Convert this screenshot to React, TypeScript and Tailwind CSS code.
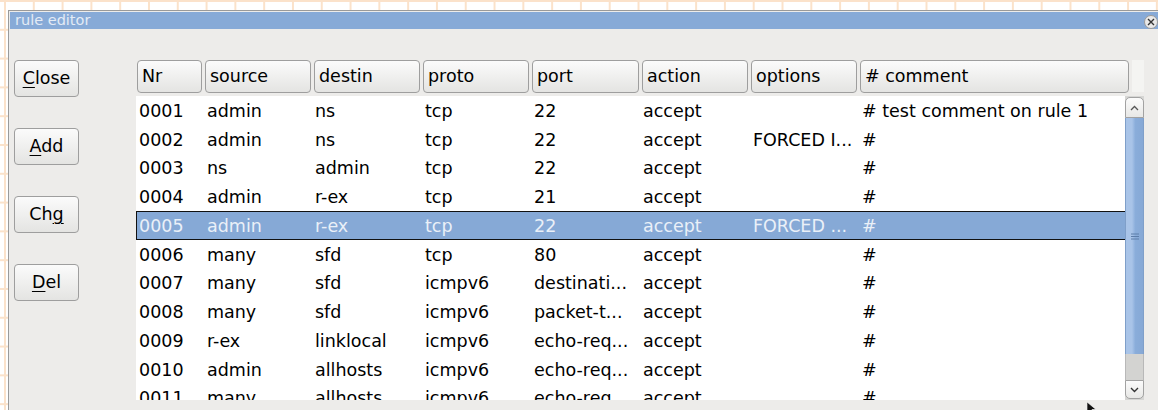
import React from 'react';

type Rule = {
  nr: string;
  source: string;
  destin: string;
  proto: string;
  port: string;
  action: string;
  options: string;
  comment: string;
};

const RULES: Rule[] = [
  { nr: '0001', source: 'admin', destin: 'ns', proto: 'tcp', port: '22', action: 'accept', options: '', comment: '# test comment on rule 1' },
  { nr: '0002', source: 'admin', destin: 'ns', proto: 'tcp', port: '22', action: 'accept', options: 'FORCED I...', comment: '#' },
  { nr: '0003', source: 'ns', destin: 'admin', proto: 'tcp', port: '22', action: 'accept', options: '', comment: '#' },
  { nr: '0004', source: 'admin', destin: 'r-ex', proto: 'tcp', port: '21', action: 'accept', options: '', comment: '#' },
  { nr: '0005', source: 'admin', destin: 'r-ex', proto: 'tcp', port: '22', action: 'accept', options: 'FORCED ...', comment: '#' },
  { nr: '0006', source: 'many', destin: 'sfd', proto: 'tcp', port: '80', action: 'accept', options: '', comment: '#' },
  { nr: '0007', source: 'many', destin: 'sfd', proto: 'icmpv6', port: 'destinati...', action: 'accept', options: '', comment: '#' },
  { nr: '0008', source: 'many', destin: 'sfd', proto: 'icmpv6', port: 'packet-t...', action: 'accept', options: '', comment: '#' },
  { nr: '0009', source: 'r-ex', destin: 'linklocal', proto: 'icmpv6', port: 'echo-req...', action: 'accept', options: '', comment: '#' },
  { nr: '0010', source: 'admin', destin: 'allhosts', proto: 'icmpv6', port: 'echo-req...', action: 'accept', options: '', comment: '#' },
  { nr: '0011', source: 'many', destin: 'allhosts', proto: 'icmpv6', port: 'echo-req...', action: 'accept', options: '', comment: '#' },
];

const SELECTED = '0005';

const btn =
  'flex items-center justify-center rounded-[4px] border border-[#9e9e9e] bg-gradient-to-b from-[#fbfbfb] to-[#e4e4e2] text-black';

function Mnemonic({ before = '', u, after = '' }: { before?: string; u: string; after?: string }) {
  return (
    <span>
      {before}
      <span className="underline underline-offset-[3px] decoration-1">{u}</span>
      {after}
    </span>
  );
}

function SideButton({ children }: { children: React.ReactNode }) {
  return <button className={`${btn} h-[37px] w-[65px]`}>{children}</button>;
}

function HeaderCell({ label, w }: { label: string; w: string }) {
  return (
    <div className={`${w} shrink-0 pr-[3px]`}>
      <div className={`${btn} h-[33px] justify-start pl-[4px]`}>{label}</div>
    </div>
  );
}

function RuleRow({ r }: { r: Rule }) {
  const sel = r.nr === SELECTED;
  // selection frame drawn as inset shadow so the cells don't shift
  return (
    <div
      className={`flex h-[28.75px] shrink-0 items-center whitespace-nowrap pt-[1px] leading-[22px] ${
        sel
          ? 'bg-[#86a9d6] text-[#eaf0f8] shadow-[inset_1px_1px_0_#111,inset_0_-1px_0_#111]'
          : 'text-black'
      }`}
    >
      <div className="w-[69px] shrink-0 pl-[3px]">{r.nr}</div>
      <div className="w-[109px] shrink-0 overflow-hidden pl-[2px]">{r.source}</div>
      <div className="w-[109px] shrink-0 overflow-hidden pl-[1px]">{r.destin}</div>
      <div className="w-[109px] shrink-0 overflow-hidden pl-[2px]">{r.proto}</div>
      <div className="w-[110px] shrink-0 overflow-hidden pl-[2px]">{r.port}</div>
      <div className="w-[109px] shrink-0 overflow-hidden pl-[1px]">{r.action}</div>
      <div className="w-[109px] shrink-0 overflow-hidden pl-[2px]">{r.options}</div>
      <div className="flex-1 overflow-hidden pl-[2px]">{r.comment}</div>
    </div>
  );
}

function ScrollBar() {
  return (
    <div className="flex w-[19px] shrink-0 flex-col bg-[#d6d6d4] pt-[1px] pb-[1px]">
      <div className="flex h-[21px] items-center justify-center rounded-t-[5px] border border-[#a2a2a2] bg-gradient-to-b from-[#fbfbfb] to-[#e8e8e6]">
        <svg width="9" height="6" viewBox="0 0 9 6">
          <path d="M1 5 L4.5 1.5 L8 5" fill="none" stroke="#555" strokeWidth="1.3" />
        </svg>
      </div>
      <div className="flex h-[236px] items-center justify-center border-x border-[#7f9fc9] bg-[linear-gradient(90deg,#a9c4e8_0%,#a9c4e8_35%,#8aadda_55%,#86a8d5_100%)]">
        <svg width="8" height="7" viewBox="0 0 8 7">
          <path d="M0 1 H8 M0 3.5 H8 M0 6 H8" stroke="#5d7eaa" strokeWidth="1" />
        </svg>
      </div>
      <div className="flex-1 border-x border-[#b8b8b8] bg-[#d3d3d1]" />
      <div className="flex h-[19px] items-center justify-center rounded-b-[5px] border border-[#a2a2a2] bg-gradient-to-b from-[#fbfbfb] to-[#e8e8e6]">
        <svg width="9" height="6" viewBox="0 0 9 6">
          <path d="M1 1 L4.5 4.5 L8 1" fill="none" stroke="#333" strokeWidth="1.4" />
        </svg>
      </div>
    </div>
  );
}

export default function App() {
  return (
    <div
      className="relative h-[410px] w-[1158px] overflow-hidden bg-white bg-[linear-gradient(90deg,#fbe2ca_2px,transparent_2px),linear-gradient(180deg,#fbe2ca_2px,transparent_2px)] bg-[length:28.8px_28.8px] bg-[position:4px_0px] pl-[8px] pt-[10px] text-[17.5px] leading-none"
      style={{ fontFamily: '"DejaVu Sans", Verdana, sans-serif' }}
    >
      <div className="flex h-[420px] flex-col border-l border-t border-[#9a9a9a] bg-[#edecea] pl-[1px] pt-[1px]">
        {/* title bar */}
        <div className="flex h-[17px] shrink-0 items-center justify-between bg-[#87aad7] pl-[5px]">
          <span className="text-[14.5px] text-[#e3ebf5]">rule editor</span>
          <span className="mt-[2px] flex h-[14px] w-[14px] items-center justify-center rounded-full border border-[#9a9a9a] bg-[#e9e9e9]">
            <svg width="8" height="8" viewBox="0 0 8 8">
              <path d="M1 1 L7 7 M7 1 L1 7" stroke="#333" strokeWidth="1.4" />
            </svg>
          </span>
        </div>

        <div className="flex flex-1 pt-[30px] pl-[4px]">
          {/* actions */}
          <div className="flex w-[65px] shrink-0 flex-col gap-[31px] pt-[1px]">
            <SideButton>
              <Mnemonic u="C" after="lose" />
            </SideButton>
            <SideButton>
              <Mnemonic u="A" after="dd" />
            </SideButton>
            <SideButton>
              <Mnemonic before="Ch" u="g" />
            </SideButton>
            <SideButton>
              <Mnemonic u="D" after="el" />
            </SideButton>
          </div>

          {/* rule table */}
          <div className="ml-[57px] flex h-[341px] w-[1008px] shrink-0 flex-col">
            <div className="flex h-[37px] shrink-0 pt-[1px] pl-[1px]">
              <HeaderCell label="Nr" w="w-[68px]" />
              <HeaderCell label="source" w="w-[109px]" />
              <HeaderCell label="destin" w="w-[109px]" />
              <HeaderCell label="proto" w="w-[109px]" />
              <HeaderCell label="port" w="w-[110px]" />
              <HeaderCell label="action" w="w-[109px]" />
              <HeaderCell label="options" w="w-[109px]" />
              <HeaderCell label="# comment" w="w-[272px]" />
              <div className="mb-[4px] flex-1 bg-[#f4f4f2]" />
            </div>
            <div className="flex flex-1 overflow-hidden">
              <div className="flex flex-1 flex-col overflow-hidden bg-white">
                {RULES.map((r) => (
                  <RuleRow key={r.nr} r={r} />
                ))}
              </div>
              <ScrollBar />
            </div>
          </div>
        </div>
      </div>

      {/* mouse pointer */}
      <svg className="absolute left-[1087px] top-[402px]" width="10" height="14" viewBox="0 0 10 14">
        <path d="M0 0 L0 11 L3 8.5 L5 13 L7 12 L5 7.5 L9 7.5 Z" fill="#111" stroke="#fff" strokeWidth="0.6" />
      </svg>
    </div>
  );
}
